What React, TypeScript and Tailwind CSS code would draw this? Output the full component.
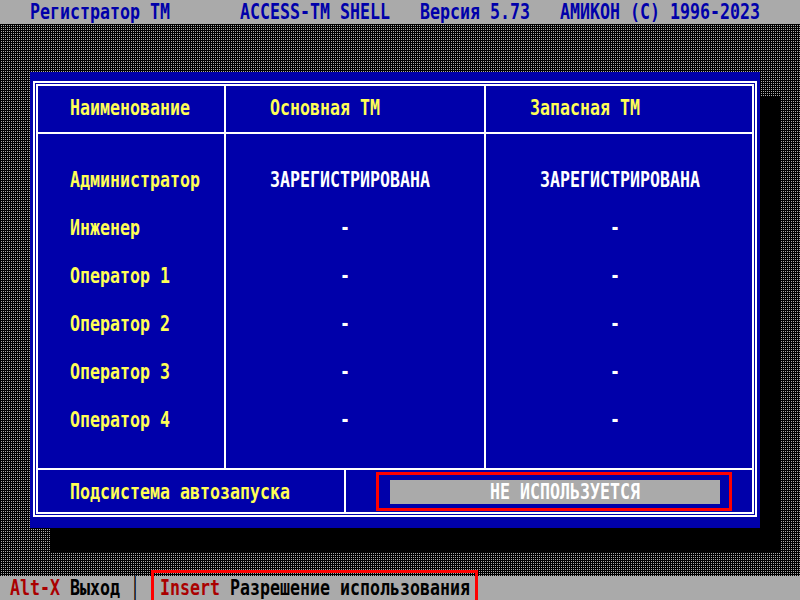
import React from 'react';

const font = "font-['DejaVu_Sans_Mono',monospace] text-[16.61px] font-bold";

function Line({ children, className = '' }: { children: React.ReactNode; className?: string }) {
  return (
    <div className={`h-[24px] leading-[24px] whitespace-pre scale-y-[1.25] translate-y-[1px] ${className}`}>
      {children}
    </div>
  );
}

const users = ['Администратор', 'Инженер', 'Оператор 1', 'Оператор 2', 'Оператор 3', 'Оператор 4'];

export default function App() {
  return (
    <div className={`w-[800px] h-[600px] flex flex-col overflow-hidden bg-black ${font}`}>
      {/* top status line */}
      <div className="h-[24px] bg-[#aaaaaa] text-[#0000aa]">
        <Line>{'   Регистратор ТМ       ACCESS-TM SHELL   Версия 5.73   АМИКОН (С) 1996-2023'}</Line>
      </div>

      {/* desktop */}
      <div className="flex-1 pt-[48px] pl-[30px] bg-[image:conic-gradient(at_1px_1px,#000_25%,#aaaaaa_0_50%,#000_0)] bg-[length:2px_2px]">
        <div className="w-[730px] h-[456px] bg-[#0000aa] pt-[9px] pb-[11px] px-[3px] shadow-[20px_24px_0_0_#000]">
          <div className="h-full border-2 border-white p-[1px]">
            <div className="h-full border-2 border-white flex flex-col">
              {/* header */}
              <div className="h-[46px] flex text-[#ffff55]">
                <div className="w-[186px] pt-[10px] pl-[32px]">
                  <Line>Наименование</Line>
                </div>
                <div className="w-[260px] border-l-2 border-white pt-[10px] pl-[44px]">
                  <Line>Основная ТМ</Line>
                </div>
                <div className="flex-1 border-l-2 border-white pt-[10px] pl-[44px]">
                  <Line>Запасная ТМ</Line>
                </div>
              </div>

              {/* body */}
              <div className="h-[336px] flex border-t-2 border-white">
                <div className="w-[186px] pt-[34px] pl-[32px] flex flex-col gap-[24px] text-[#ffff55]">
                  {users.map((u) => (
                    <Line key={u}>{u}</Line>
                  ))}
                </div>
                <div className="w-[260px] border-l-2 border-white pt-[34px] flex flex-col gap-[24px] text-white">
                  <Line className="pl-[44px]">ЗАРЕГИСТРИРОВАНА</Line>
                  {users.slice(1).map((u) => (
                    <Line key={u} className="pl-[114px]">-</Line>
                  ))}
                </div>
                <div className="flex-1 border-l-2 border-white pt-[34px] flex flex-col gap-[24px] text-white">
                  <Line className="pl-[54px]">ЗАРЕГИСТРИРОВАНА</Line>
                  {users.slice(1).map((u) => (
                    <Line key={u} className="pl-[124px]">-</Line>
                  ))}
                </div>
              </div>

              {/* autostart */}
              <div className="h-[44px] flex border-t-2 border-white">
                <div className="w-[306px] pt-[10px] pl-[32px] text-[#ffff55]">
                  <Line>Подсистема автозапуска</Line>
                </div>
                <div className="flex-1 border-l-2 border-white pt-[2px] pl-[30px]">
                  <div className="w-[356px] h-[39px] border-[3px] border-[#ff0000] pt-[5px] pl-[11px]">
                    <div className="w-[330px] h-[24px] bg-[#aaaaaa] text-white pl-[100px]">
                      <Line>НЕ ИСПОЛЬЗУЕТСЯ</Line>
                    </div>
                  </div>
                </div>
              </div>
            </div>
          </div>
        </div>
      </div>

      {/* bottom key line */}
      <div className="relative h-[24px] bg-[#aaaaaa] text-black">
        <Line>
          {' '}
          <span className="text-[#aa0000]">Alt-X</span>
          {' Выход │  '}
          <span className="text-[#aa0000]">Insert</span>
          {' Разрешение использования'}
        </Line>
        <div className="absolute left-[151px] top-[-6px] w-[327px] h-[40px] border-[3px] border-[#ff0000]" />
      </div>
    </div>
  );
}
